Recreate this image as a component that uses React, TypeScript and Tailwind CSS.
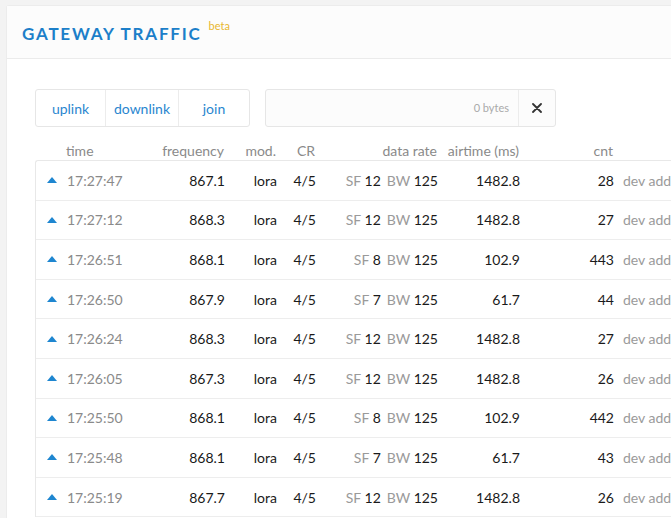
const rows = [
  { time: "17:27:47", freq: "867.1", sf: "12", air: "1482.8", cnt: "28" },
  { time: "17:27:12", freq: "868.3", sf: "12", air: "1482.8", cnt: "27" },
  { time: "17:26:51", freq: "868.1", sf: "8", air: "102.9", cnt: "443" },
  { time: "17:26:50", freq: "867.9", sf: "7", air: "61.7", cnt: "44" },
  { time: "17:26:24", freq: "868.3", sf: "12", air: "1482.8", cnt: "27" },
  { time: "17:26:05", freq: "867.3", sf: "12", air: "1482.8", cnt: "26" },
  { time: "17:25:50", freq: "868.1", sf: "8", air: "102.9", cnt: "442" },
  { time: "17:25:48", freq: "868.1", sf: "7", air: "61.7", cnt: "43" },
  { time: "17:25:19", freq: "867.7", sf: "12", air: "1482.8", cnt: "26" },
];

function Uplink() {
  return (
    <svg width="10" height="6" viewBox="0 0 10 6" className="block">
      <path d="M5 0 L10 6 L0 6 Z" fill="#1e86d0" />
    </svg>
  );
}

export default function App() {
  return (
    <div className="min-h-screen bg-[#f3f3f3] pl-[6px] pt-[5px] overflow-hidden font-['Lato','Noto_Sans',sans-serif]">
      <div className="w-[800px] h-[600px] bg-white rounded-tl-[3px] border-l border-t border-[#ececec]">
        <div className="h-[53px] bg-[#fcfcfc] border-b border-[#ebebeb] flex items-start pl-[15px] pt-[17px]">
          <span className="text-[17px] font-bold tracking-[0.105em] text-[#1c7fc9] leading-[22px]">
            GATEWAY TRAFFIC
          </span>
          <span className="ml-[7px] -mt-[4px] text-[11px] text-[#e8b730] leading-[14px]">beta</span>
        </div>

        <div className="pl-[28px] pt-[30px]">
          <div className="flex gap-[15px]">
            <div className="flex h-[38px] w-[215px] border border-[#e6e6e6] rounded-[3px] text-[14px] text-[#2a86cf]">
              <div className="w-[70px] flex items-center justify-center border-r border-[#ececec]">uplink</div>
              <div className="w-[73px] flex items-center justify-center border-r border-[#ececec]">downlink</div>
              <div className="flex-1 flex items-center justify-center">join</div>
            </div>
            <div className="flex h-[38px] w-[291px] border border-[#e6e6e6] rounded-[3px] bg-[#fcfcfc]">
              <div className="flex-1 flex items-center justify-end pr-[9px] text-[11px] text-[#aaaaaa]">0 bytes</div>
              <div className="w-[37px] flex items-center justify-center border-l border-[#ececec]">
                <svg width="10" height="10" viewBox="0 0 10 10">
                  <path d="M1 1 L9 9 M9 1 L1 9" stroke="#333" strokeWidth="1.8" strokeLinecap="round" />
                </svg>
              </div>
            </div>
          </div>

          <div className="mt-[13px] flex h-[20px] items-center text-[14px] text-[#8a8a8a]">
            <div className="w-[25px]" />
            <div className="w-[80px] pl-[6px]">time</div>
            <div className="w-[84px] text-right">frequency</div>
            <div className="w-[52px] text-right">mod.</div>
            <div className="w-[39px] text-right">CR</div>
            <div className="w-[122px] text-right">data rate</div>
            <div className="w-[82px] text-right">airtime (ms)</div>
            <div className="w-[94px] text-right">cnt</div>
          </div>

          <div className="border-l border-t border-[#e8e8e8] rounded-tl-[3px] text-[14px]">
            {rows.map((r) => (
              <div key={r.time} className="flex h-[39.6px] items-center border-b border-[#ededed] text-[#1a1a1a]">
                <div className="w-[25px] flex justify-end pr-[4px]">
                  <Uplink />
                </div>
                <div className="w-[80px] pl-[6px] text-[#8a8a8a]">{r.time}</div>
                <div className="w-[84px] text-right">{r.freq}</div>
                <div className="w-[52px] text-right">lora</div>
                <div className="w-[39px] text-right">4/5</div>
                <div className="w-[122px] text-right whitespace-nowrap">
                  <span className="text-[#9a9a9a]">SF</span> {r.sf}
                  <span className="text-[#9a9a9a] ml-[6px]">BW</span> 125
                </div>
                <div className="w-[82px] text-right">{r.air}</div>
                <div className="w-[94px] text-right">{r.cnt}</div>
                <div className="pl-[9px] text-[#9a9a9a] whitespace-nowrap">dev addr</div>
              </div>
            ))}
          </div>
        </div>
      </div>
    </div>
  );
}
